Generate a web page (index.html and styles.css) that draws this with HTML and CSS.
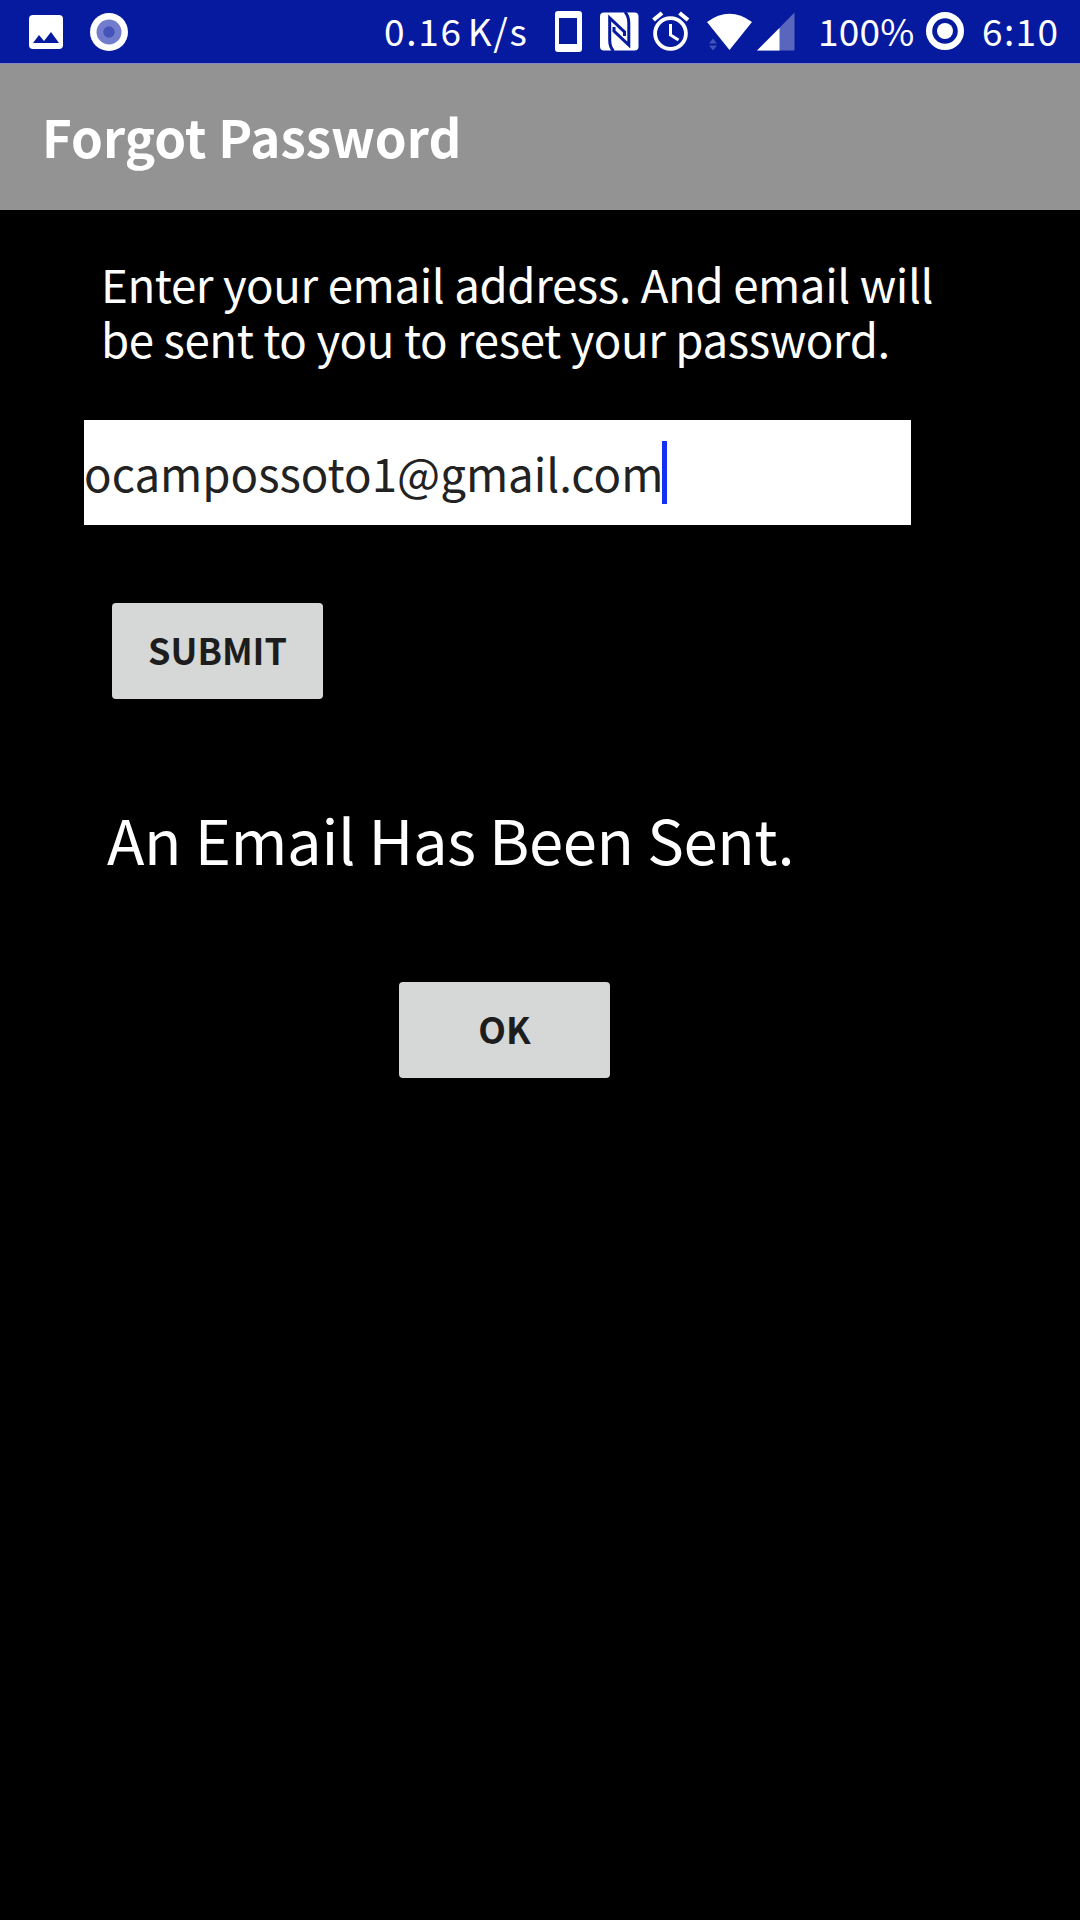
FILE: index.html
```html
<!DOCTYPE html>
<html lang="en">
<head>
<meta charset="utf-8">
<title>Forgot Password</title>
<link rel="stylesheet" href="styles.css">
</head>
<body>
<div class="status-bar">
  <div class="notifications">
    <svg width="34" height="34" viewBox="0 0 34 34"><rect width="34" height="34" rx="4" fill="#fff"/><path d="M4 28 10 20l5 6 7-9 8 11z" fill="#061a9f"/></svg>
    <svg width="38" height="38" viewBox="0 0 38 38"><circle cx="19" cy="19" r="19" fill="#fff"/><circle cx="19" cy="19" r="12.5" fill="#717dcc"/><circle cx="19" cy="19" r="5.7" fill="#4553ba"/></svg>
  </div>
  <div class="system">
    <span class="speed">0.16 K/s</span>
    <svg class="phone" width="27" height="63" viewBox="0 0 27 63"><path fill="#fff" fill-rule="evenodd" d="M3 11h21a3 3 0 0 1 3 3v35a3 3 0 0 1-3 3H3a3 3 0 0 1-3-3V14a3 3 0 0 1 3-3zm1 7v26h18V18z"/></svg>
    <svg class="nfc" width="39" height="63" viewBox="0 0 39 63"><rect y="12.5" width="38.5" height="38" rx="4" fill="#fff"/><g fill="none" stroke="#061a9f" stroke-width="3"><path d="M13.5 51Q9.700 47 9.700 40V18L24.500 32v4"/><path d="M25 12Q28.800 16 28.800 23v22L14 31v-4"/></g></svg>
    <svg class="alarm" width="38" height="63" viewBox="0 0 38 63"><g fill="none" stroke="#fff"><circle cx="18.5" cy="33.5" r="15.4" stroke-width="3.8"/><path d="M18.5 24v11l8 5" stroke-width="3"/><path d="m1.500 20 8.500-7M36 20l-8.500-7" stroke-width="4.2"/></g></svg>
    <svg class="wifi" width="46" height="63" viewBox="0 0 46 63"><path d="M0 22Q22.500 5.500 45 22L22.500 50z" fill="#fff"/><path d="m2 43.500 4-5 4 5zM2 45.500l4 5 4-5z" fill="#4252b8"/></svg>
    <svg class="signal" width="38" height="63" viewBox="0 0 38 63"><path d="M37.500 12.500v38H0z" fill="#5966be"/><path d="M22.500 28v22.500H0z" fill="#fff"/></svg>
    <span class="battery-level">100%</span>
    <svg class="battery" width="38" height="63" viewBox="0 0 38 63"><circle cx="19" cy="31" r="15.9" fill="none" stroke="#fff" stroke-width="6.2"/><circle cx="19" cy="31" r="8" fill="#fff"/></svg>
    <span class="clock">6:10</span>
  </div>
</div>
<header class="app-bar"><h1>Forgot Password</h1></header>
<main>
  <p class="hint">Enter your email address. And email will<br>be sent to you to reset your password.</p>
  <div class="field"><span>ocampossoto1@gmail.com</span><i class="caret"></i></div>
  <button class="btn submit">SUBMIT</button>
  <p class="message">An Email Has Been Sent.</p>
  <button class="btn ok">OK</button>
</main>
</body>
</html>
```
FILE: styles.css
```css
* { box-sizing: border-box; }
body {
  margin: 0;
  min-height: 1920px;
  background: #000;
  color: #fff;
  font-family: "Noto Sans CJK SC", "Noto Sans", sans-serif;
  font-size: 45.6px;
}
h1, p { margin: 0; font-weight: 400; white-space: nowrap; }
svg { display: block; flex: none; }

.status-bar {
  display: flex;
  height: 63px;
  background: #061a9f;
  justify-content: space-between;
}
.notifications { display: flex; align-items: center; gap: 27px; padding-left: 29px; }
.system { display: flex; padding-right: 21px; font-size: 37px; line-height: 61px; white-space: nowrap; }
.speed { width: 146px; letter-spacing: 1.7px; word-spacing: -5px; }
.phone { margin-left: 25px; }
.nfc { margin-left: 18px; }
.alarm { margin-left: 13px; }
.wifi { margin-left: 17px; }
.signal { margin-left: 4px; }
.battery-level { width: 97px; margin-left: 23px; letter-spacing: 0.2px; }
.battery { margin-left: 11px; }
.clock { width: 77px; margin-left: 18px; letter-spacing: 1.4px; }

.app-bar {
  height: 147px;
  padding-left: 42px;
  background: #939393;
  border-top: 1px solid #8389c4;
}
.app-bar h1 { font-size: 51px; font-weight: 700; line-height: 144px; letter-spacing: 0.1px; }

main { display: flex; flex-direction: column; align-items: flex-start; padding: 46px 84px 0; }
.hint { padding-left: 17px; line-height: 55px; letter-spacing: -0.4px; }
.field {
  display: flex;
  align-items: center;
  width: 827px;
  height: 105px;
  margin-top: 54px;
  background: #fff;
  color: #222;
}
.field span { width: 578px; line-height: 105px; white-space: nowrap; }
.caret { width: 5px; height: 63px; background: #1530f5; }
.btn {
  width: 211px;
  height: 96px;
  padding: 0 0 3px;
  border: 0;
  border-radius: 4px;
  background: #d6d8d7;
  color: #1d1d1d;
  font: 700 36px/93px "Noto Sans CJK SC", "Noto Sans", sans-serif;
}
.submit { margin: 78px 0 0 28px; }
.message { margin: 100px 0 0 23px; font-size: 61.5px; line-height: 80px; letter-spacing: -0.35px; }
.ok { margin: 103px 0 0 315px; }
```
